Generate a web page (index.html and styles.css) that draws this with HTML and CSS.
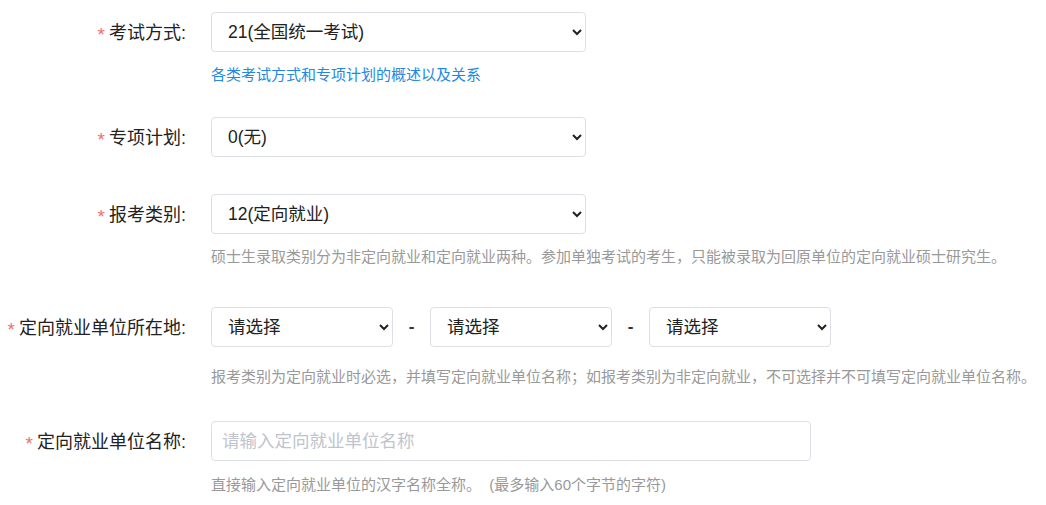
FILE: index.html
```html
<!DOCTYPE html>
<html lang="zh-CN">
<head>
<meta charset="utf-8">
<title>报考信息</title>
<link rel="stylesheet" href="styles.css">
</head>
<body>
<form class="form">
  <div class="group g1">
    <div class="row">
      <label class="label"><span class="req">*</span>考试方式:</label>
      <select class="ctl w375"><option>21(全国统一考试)</option></select>
    </div>
    <div class="help link h1">各类考试方式和专项计划的概述以及关系</div>
  </div>
  <div class="group g2">
    <div class="row">
      <label class="label"><span class="req">*</span>专项计划:</label>
      <select class="ctl w375"><option>0(无)</option></select>
    </div>
  </div>
  <div class="group g3">
    <div class="row">
      <label class="label"><span class="req">*</span>报考类别:</label>
      <select class="ctl w375"><option>12(定向就业)</option></select>
    </div>
    <div class="help h3">硕士生录取类别分为非定向就业和定向就业两种。参加单独考试的考生，只能被录取为回原单位的定向就业硕士研究生。</div>
  </div>
  <div class="group g4">
    <div class="row">
      <label class="label"><span class="req">*</span>定向就业单位所在地:</label>
      <select class="ctl w182"><option>请选择</option></select>
      <span class="dash">-</span>
      <select class="ctl w182"><option>请选择</option></select>
      <span class="dash">-</span>
      <select class="ctl w182"><option>请选择</option></select>
    </div>
    <div class="help h4">报考类别为定向就业时必选，并填写定向就业单位名称；如报考类别为非定向就业，不可选择并不可填写定向就业单位名称。</div>
  </div>
  <div class="group g5">
    <div class="row">
      <label class="label"><span class="req">*</span>定向就业单位名称:</label>
      <input class="ctl w600 input" type="text" placeholder="请输入定向就业单位名称">
    </div>
    <div class="help h5">直接输入定向就业单位的汉字名称全称。&nbsp;&nbsp;(最多输入60个字节的字符)</div>
  </div>
</form>
</body>
</html>
```

FILE: styles.css
```css
html, body {
  margin: 0;
  padding: 0;
  background: #fff;
}
body {
  font-family: "Liberation Sans", "Noto Sans CJK SC", sans-serif;
  color: #222;
}
.form {
  padding-top: 12px;
}
.row {
  display: flex;
  align-items: center;
  height: 40px;
}
.label {
  width: 186px;
  margin-right: 25px;
  text-align: right;
  font-size: 18px;
  color: #222;
  white-space: nowrap;
}
.req {
  color: #f56c6c;
  margin-right: 4px;
  font-size: 19px;
  vertical-align: -2px;
}
.ctl {
  box-sizing: border-box;
  height: 40px;
  border: 1px solid #dcdfe6;
  border-radius: 4px;
  background: #fff;
  font-family: "Liberation Sans", "Noto Sans CJK SC", sans-serif;
  font-size: 17.5px;
  color: #222;
  padding: 0 8px 0 12px;
  outline: none;
}
.w375 { width: 375px; }
.w182 { width: 182px; }
.w600 { width: 600px; }
.input {
  padding-left: 10px;
}
.input::placeholder {
  color: #c0c4cc;
}
.dash {
  width: 37px;
  text-align: center;
  font-size: 17px;
  font-weight: bold;
  color: #333;
}
.help {
  margin-left: 211px;
  font-size: 15px;
  line-height: 18px;
  color: #999;
  white-space: nowrap;
}
.link { color: #2288e3; }
.h1 { margin-top: 14px; }
.h3 { margin-top: 14px; }
.h4 { margin-top: 21px; }
.h5 { margin-top: 15px; }
.g1 { margin-bottom: 33px; }
.g2 { margin-bottom: 37px; }
.g3 { margin-bottom: 41px; }
.g4 { margin-bottom: 35px; }
```
